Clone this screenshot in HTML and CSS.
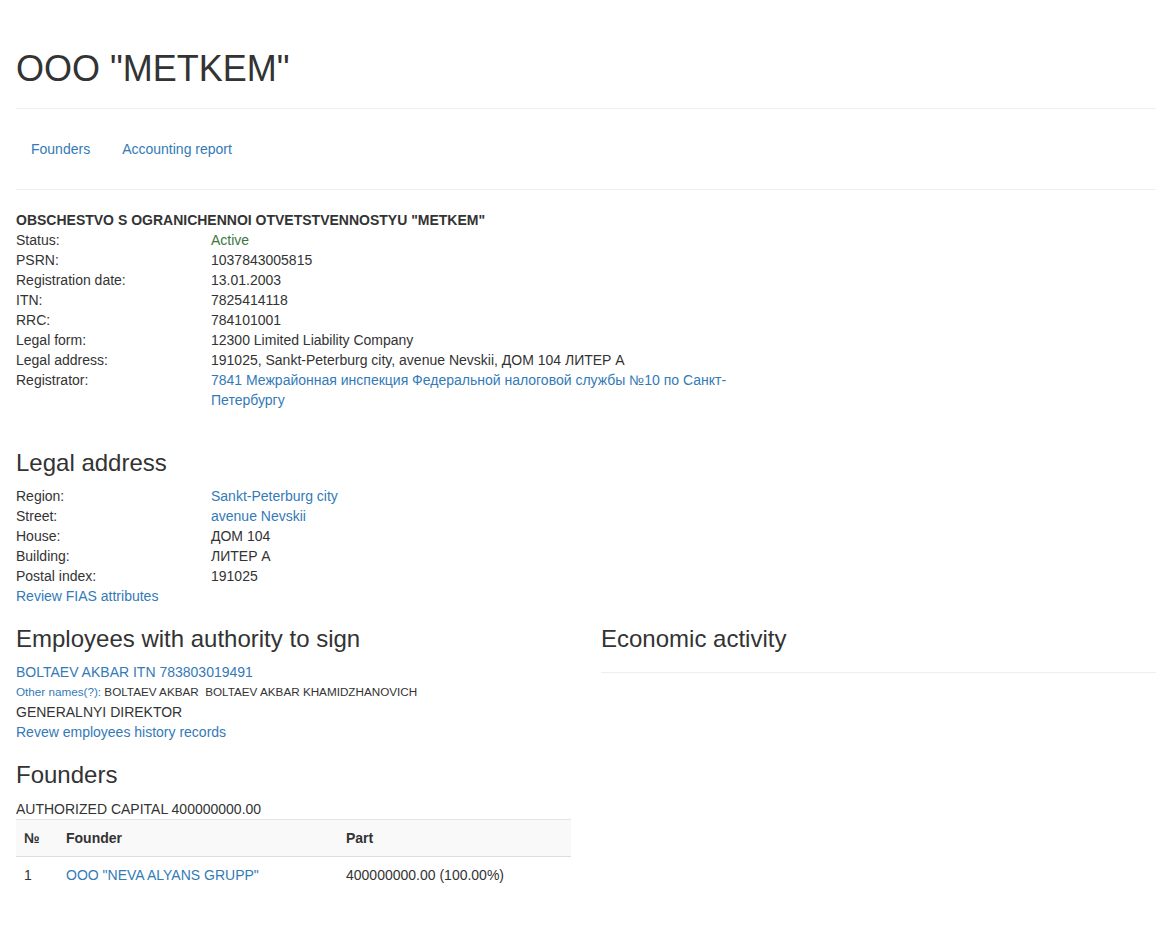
FILE: index.html
```html
<!DOCTYPE html>
<html>
<head>
<meta charset="utf-8">
<title>OOO "METKEM"</title>
<link rel="stylesheet" href="styles.css">
</head>
<body>
<div class="container">
  <div class="page-header">
    <h1>OOO "METKEM"</h1>
  </div>
  <ul class="nav-pills">
    <li><a href="#">Founders</a></li>
    <li><a href="#">Accounting report</a></li>
  </ul>
  <hr class="rule">

  <div class="company-name">OBSCHESTVO S OGRANICHENNOI OTVETSTVENNOSTYU "METKEM"</div>
  <dl class="info spaced">
    <dt>Status:</dt><dd class="ok">Active</dd>
    <dt>PSRN:</dt><dd>1037843005815</dd>
    <dt>Registration date:</dt><dd>13.01.2003</dd>
    <dt>ITN:</dt><dd>7825414118</dd>
    <dt>RRC:</dt><dd>784101001</dd>
    <dt>Legal form:</dt><dd>12300 Limited Liability Company</dd>
    <dt>Legal address:</dt><dd>191025, Sankt-Peterburg city, avenue Nevskii, ДОМ 104 ЛИТЕР А</dd>
    <dt>Registrator:</dt><dd><a href="#">7841 Межрайонная инспекция Федеральной налоговой службы №10 по Санкт-Петербургу</a></dd>
  </dl>

  <h3>Legal address</h3>
  <dl class="info">
    <dt>Region:</dt><dd><a href="#">Sankt-Peterburg city</a></dd>
    <dt>Street:</dt><dd><a href="#">avenue Nevskii</a></dd>
    <dt>House:</dt><dd>ДОМ 104</dd>
    <dt>Building:</dt><dd>ЛИТЕР А</dd>
    <dt>Postal index:</dt><dd>191025</dd>
  </dl>
  <a class="block-link" href="#">Review FIAS attributes</a>

  <div class="row">
    <div class="col">
      <h3>Employees with authority to sign</h3>
      <a class="block-link" href="#">BOLTAEV AKBAR ITN 783803019491</a>
      <div class="small-line"><a href="#">Other names(?):</a> BOLTAEV AKBAR &nbsp;BOLTAEV AKBAR KHAMIDZHANOVICH</div>
      <div>GENERALNYI DIREKTOR</div>
      <a class="block-link" href="#">Revew employees history records</a>

      <h3>Founders</h3>
      <div>AUTHORIZED CAPITAL 400000000.00</div>
      <table class="table">
        <thead>
          <tr><th class="c-num">№</th><th class="c-founder">Founder</th><th>Part</th></tr>
        </thead>
        <tbody>
          <tr><td>1</td><td><a href="#">OOO "NEVA ALYANS GRUPP"</a></td><td>400000000.00 (100.00%)</td></tr>
        </tbody>
      </table>
    </div>
    <div class="col">
      <h3 class="econ">Economic activity</h3>
      <hr class="econ-rule">
    </div>
  </div>
</div>
</body>
</html>
```

FILE: styles.css
```css
* { box-sizing: border-box; }
html, body { margin: 0; padding: 0; background: #fff; }
body {
  font-family: "Liberation Sans", Arial, Helvetica, sans-serif;
  font-size: 14px;
  line-height: 20px;
  color: #333;
}
a { color: #337ab7; text-decoration: none; }
.container {
  width: 1170px;
  margin: 0 auto;
  padding: 49px 15px 30px;
}
.page-header {
  padding-bottom: 9px;
  margin: 0 0 20px;
  border-bottom: 1px solid #eee;
}
.page-header h1 {
  font-size: 36px;
  font-weight: 500;
  line-height: 39.6px;
  margin: 0 0 10px;
}
.nav-pills {
  list-style: none;
  margin: 0;
  padding: 0;
  display: flex;
  gap: 2px;
}
.nav-pills a {
  display: block;
  padding: 10px 15px;
  line-height: 20px;
}
.rule {
  margin: 20px 0;
  border: 0;
  border-top: 1px solid #eee;
  height: 0;
}
.company-name { font-weight: bold; }
.info {
  display: grid;
  grid-template-columns: 195px 555px;
  margin: 0;
}
.info.spaced { padding-bottom: 20px; }
.info dt { font-weight: normal; margin: 0; }
.info dd { margin: 0; }
.ok { color: #3c763d; }
h3 {
  font-size: 24px;
  font-weight: 500;
  line-height: 26.4px;
  margin: 20px 0 10px;
}
.block-link { display: block; }
.row {
  display: grid;
  grid-template-columns: 555px 555px;
  column-gap: 30px;
}
.col { min-width: 0; }
.small-line { font-size: 11.7px; }
.econ { margin-bottom: 20px; }
.econ-rule {
  margin: 0;
  border: 0;
  border-top: 1px solid #eee;
  height: 0;
}
.table {
  width: 555px;
  border-collapse: collapse;
  border-spacing: 0;
  margin-bottom: 20px;
}
.table th, .table td {
  text-align: left;
  padding: 8px;
  line-height: 20px;
  vertical-align: top;
}
.table thead th {
  background: #f9f9f9;
  border-top: 1px solid #e4e4e4;
  border-bottom: 1px solid #ddd;
  font-weight: bold;
}
.table td { border-top: 0; }
.c-num { width: 42px; }
.c-founder { width: 280px; }
```
